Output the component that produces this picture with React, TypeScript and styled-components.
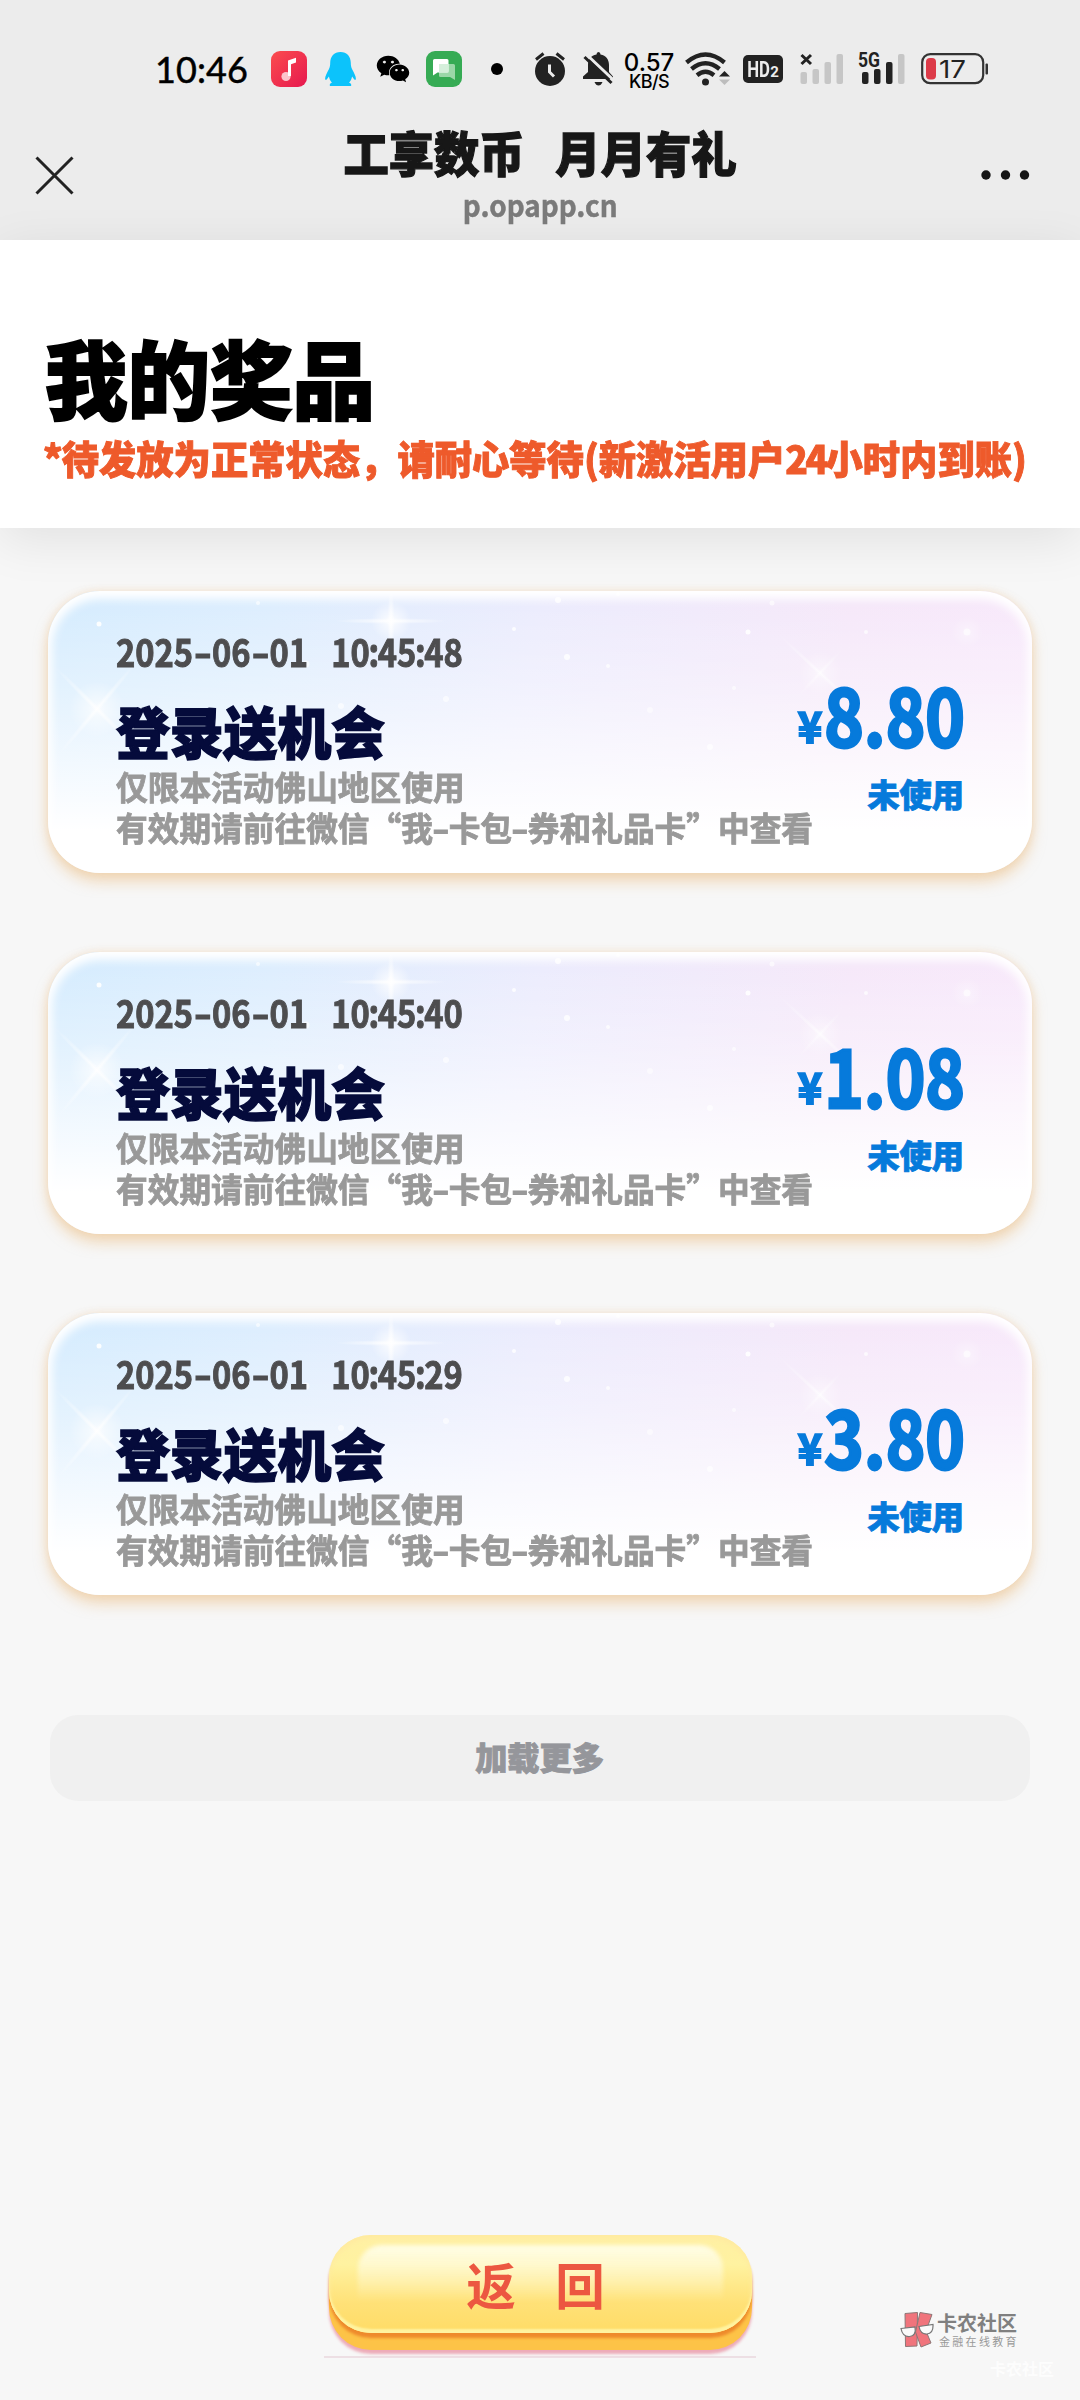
import React from "react";
import styled, { createGlobalStyle } from "styled-components";
import { FaWeixin } from "react-icons/fa";

const cjk = `"Noto Sans CJK SC", "Noto Sans", sans-serif`;

const GlobalStyle = createGlobalStyle`
  * { box-sizing: border-box; }
  body { margin: 0; background: #f7f7f7; font-family: ${cjk}; }
`;

const Screen = styled.div`
  width: 1080px;
  height: 2400px;
  display: flex;
  flex-direction: column;
  background: #f7f7f7;
  overflow: hidden;
`;

const Header = styled.header`
  height: 240px;
  flex: none;
  background: #ececec;
  display: flex;
  flex-direction: column;
`;

const StatusBar = styled.div`
  height: 120px;
  padding: 18px 0 0 155px;
  display: flex;
  align-items: center;
  color: #000;
`;

const Clock = styled.span`
  width: 116px;
  font: 400 36px/50px Lato, sans-serif;
  letter-spacing: 0.1px;
  white-space: nowrap;
  -webkit-text-stroke: 0.5px #000;
`;

const Slot = styled.span<{ $w: number; $gap?: number }>`
  flex: none;
  display: flex;
  width: ${(p) => p.$w}px;
  margin-right: ${(p) => p.$gap ?? 0}px;
`;

const Speed = styled.span`
  display: flex;
  flex-direction: column;
  align-items: center;
  width: 52px;
  padding-top: 4px;
  margin-right: 10px;
  font-family: Inter, Roboto, sans-serif;
  font-weight: 500;
  white-space: nowrap;
`;
const SpeedValue = styled.span`
  font-size: 24px;
  line-height: 20px;
`;
const SpeedUnit = styled.span`
  font-size: 18px;
  line-height: 17px;
  letter-spacing: -0.6px;
`;

const NavBar = styled.div`
  flex: 1;
  display: flex;
  justify-content: space-between;
  padding: 0 50px 0 35px;
`;
const NavSide = styled.div`
  width: 49px;
  padding-top: 36px;
`;
const NavTitles = styled.div`
  display: flex;
  flex-direction: column;
  align-items: center;
  padding-left: 15px;
`;
const NavTitle = styled.h1`
  margin: 1px 0 3px;
  font-size: 45.3px;
  line-height: 60px;
  font-weight: 900;
  color: #171717;
  white-space: pre;
  word-spacing: 5px;
  -webkit-text-stroke: 1.2px #171717;
  transform: scaleY(1.06);
`;
const NavUrl = styled.span`
  font-size: 30px;
  line-height: 40px;
  font-weight: 700;
  color: #7a7a7a;
  -webkit-text-stroke: 0.5px #7a7a7a;
  transform: scaleX(0.93);
`;

const Hero = styled.section`
  height: 288px;
  flex: none;
  background: #fff;
  padding: 82px 0 0 45px;
  box-shadow: 0 12px 48px rgba(0, 0, 0, 0.09);
`;
const HeroTitle = styled.h2`
  margin: 0;
  font-size: 82.5px;
  line-height: 108px;
  font-weight: 900;
  color: #000;
  -webkit-text-stroke: 2px #000;
  transform: scaleY(1.03);
`;
const HeroNote = styled.p`
  margin: 1px 0 0 -2px;
  font-size: 37.3px;
  line-height: 52px;
  font-weight: 900;
  color: #ee5a2b;
  white-space: nowrap;
  -webkit-text-stroke: 0.9px #ee5a2b;
  transform: scaleY(1.04);
`;
const Tight = styled.span<{ $by: number }>`
  letter-spacing: ${(p) => -p.$by}px;
`;

const List = styled.main`
  flex: none;
  display: flex;
  flex-direction: column;
  gap: 79px;
  padding: 63px 48px 0;
`;

const CardBox = styled.article`
  position: relative;
  height: 282px;
  display: flex;
  justify-content: space-between;
  padding: 35px 69px 0 68px;
  border-radius: 52px;
  background: linear-gradient(180deg, rgba(255, 255, 255, 0) 0%, rgba(255, 255, 255, 0.35) 35%, #fff 85%),
    linear-gradient(100deg, #d3ebfe 0%, #dcedfe 22%, #ebebfd 48%, #f5e7f9 78%, #f8e8fb 100%);
  box-shadow: inset 0 4px 10px 4px #fff, 0 9px 14px rgba(236, 190, 130, 0.5), 0 0 8px rgba(240, 205, 165, 0.45);
`;
const Sparkles = styled.svg`
  position: absolute;
  left: 0;
  top: 0;
  border-radius: 52px;
`;
const Details = styled.div`
  position: relative;
  display: flex;
  flex-direction: column;
`;
const Stamp = styled.time`
  display: flex;
  width: 400px;
  font-size: 38px;
  line-height: 50px;
  font-weight: 700;
  color: #4d4d4f;
  white-space: nowrap;
  -webkit-text-stroke: 1px #4d4d4f;
  transform: scaleX(0.86);
  transform-origin: left center;
`;
const Dash = styled.span<{ $w: number }>`
  display: inline-block;
  width: ${(p) => p.$w}px;
  text-align: center;
  transform: scaleX(1.5);
`;
const Colon = styled.span`
  margin: 0 -1.6px;
`;
const Clocktime = styled.span`
  margin-left: 27px;
`;
const CardTitle = styled.h3`
  margin: 24px 0 6px;
  font-size: 53.8px;
  line-height: 60px;
  font-weight: 900;
  color: #050b3b;
  -webkit-text-stroke: 1.4px #050b3b;
  transform: scaleY(1.04);
`;
const Rule = styled.p`
  margin: 0;
  font-size: 31.7px;
  line-height: 41px;
  font-weight: 700;
  color: #999;
  white-space: nowrap;
  -webkit-text-stroke: 0.8px #999;
  transform: scaleY(1.03);
`;
const Value = styled.div`
  position: relative;
  width: 0;
  display: flex;
  flex-direction: column;
  align-items: flex-end;
  padding-top: 46px;
  color: #067adb;
  white-space: nowrap;
`;
const Amount = styled.div`
  display: flex;
  align-items: baseline;
  height: 80px;
  margin-right: -2px;
  font-size: 78px;
  line-height: 82px;
  font-weight: 700;
  -webkit-text-stroke: 3px #067adb;
  transform: scaleX(0.86);
  transform-origin: right center;
`;
const Currency = styled.span`
  position: relative;
  top: -4px;
  font-size: 43px;
  line-height: 40px;
  margin-right: 4px;
  -webkit-text-stroke-width: 2px;
  transform: scaleX(1.12);
`;
const State = styled.span`
  margin: 21px -1px 0 0;
  font-size: 32.2px;
  line-height: 40px;
  font-weight: 900;
  -webkit-text-stroke: 0.9px #067adb;
`;

const LoadMore = styled.button`
  flex: none;
  margin: 120px 50px 0;
  height: 86px;
  padding: 0 1px 5px 0;
  border: 0;
  border-radius: 28px;
  background: #f0f0f0;
  color: #95969b;
  font: 900 32.2px/80px ${cjk};
  -webkit-text-stroke: 0.9px #95969b;
`;

const Footer = styled.footer`
  margin-top: auto;
  height: 166px;
  display: flex;
  padding-left: 324px;
`;
const ButtonArea = styled.div`
  width: 432px;
  height: 124px;
  padding: 1px 4px 0 5px;
  border-bottom: 2px solid #eddfe4;
`;
const BackButton = styled.button`
  position: relative;
  display: block;
  width: 423px;
  height: 98px;
  padding: 0;
  border: 0;
  border-radius: 42px;
  background: linear-gradient(180deg, #fff0a4 0%, #fff2a0 30%, #ffe177 70%, #ffdc66 100%);
  box-shadow: inset 0 -4px 2px #fff3a0, inset 0 3px 5px #ffeaa0, 0 5px 3px #ee8a2c, 0 17px 0 #fdc347,
    0 21px 3px #edabb8;
  color: #ec5741;
`;
const Gloss = styled.span`
  position: absolute;
  left: 29px;
  right: 29px;
  top: 10px;
  height: 56px;
  border-radius: 24px 24px 0 0;
  background: linear-gradient(180deg, #fffde6, rgba(255, 250, 200, 0));
  filter: blur(2px);
`;
const BackLabel = styled.span`
  position: relative;
  display: flex;
  justify-content: center;
  gap: 39.5px;
  padding-right: 10px;
  font: 700 49.5px/94px ${cjk};
`;

const Watermark = styled.div`
  display: flex;
  flex-direction: column;
  align-items: flex-start;
  padding: 78px 0 0 144px;
`;
const Brand = styled.div`
  display: flex;
  gap: 3px;
`;
const BrandText = styled.div`
  display: flex;
  flex-direction: column;
`;
const BrandName = styled.span`
  font-size: 20px;
  line-height: 22px;
  font-weight: 700;
  color: #808080;
`;
const BrandTag = styled.span`
  padding-left: 2px;
  font-size: 11px;
  line-height: 14px;
  letter-spacing: 2.3px;
  color: #999;
  white-space: nowrap;
`;
const Ghost = styled.span`
  margin: 9px 0 0 90px;
  font-size: 16px;
  line-height: 22px;
  font-weight: 700;
  color: #fdfdfd;
`;

const MusicIcon = () => (
  <svg width="36" height="36" viewBox="0 0 36 36">
    <defs>
      <linearGradient id="music" x1="0" y1="0" x2="1" y2="1">
        <stop offset="0" stopColor="#fb4d4e" />
        <stop offset="1" stopColor="#e6184f" />
      </linearGradient>
    </defs>
    <rect width="36" height="36" rx="9" fill="url(#music)" />
    <circle cx="15" cy="25.5" r="4.6" fill="#fcc5cc" />
    <path d="M17 25V9.500l8-2.700v4.800l-5 1.600V25z" fill="#fff" />
  </svg>
);

const PenguinIcon = () => (
  <svg width="31" height="35" viewBox="0 0 31 35">
    <path
      d="M15.500 0C9 0 5.200 4.500 5.200 11c0 2-.3 4-1.200 6-2 4-4 7-3.900 10 .1 1.500 1.300.8 2-.1l1.800-2.400c.5 2.500 1.500 4.500 3 6.200-2 .6-2.400 1.400-2 3.300h21.200c.4-1.900 0-2.700-2-3.300 1.500-1.700 2.500-3.700 3-6.200l1.800 2.400c.7.9 1.900 1.600 2 .1.100-3-1.900-6-3.900-10-.9-2-1.200-4-1.200-6C25.800 4.500 22 0 15.500 0z"
      fill="#0cc3fb"
    />
  </svg>
);

const ChatIcon = () => (
  <svg width="36" height="36" viewBox="0 0 36 36">
    <rect width="36" height="36" rx="9" fill="#36ab54" />
    <path d="M13 13h14.500q1.500 0 1.500 1.500V29l-5-3H14.500q-1.500 0-1.500-1.500z" fill="#9bd7a8" />
    <path d="M8.500 8H21q1.500 0 1.500 1.500v10.500q0 1.500-1.500 1.500H11.500L7 24.500V9.500Q7 8 8.500 8z" fill="#fff" />
    <path d="M13 13h9.500v8.500H13z" fill="#d5efdb" />
  </svg>
);

const AlarmIcon = () => (
  <svg width="32" height="34" viewBox="0 0 32 34" fill="none">
    <circle cx="16" cy="19" r="15" fill="#222" />
    <path d="M2 7.500 9.500 1.500M22.500 1.500 30 7.500" stroke="#222" strokeWidth="3" />
    <path d="M15.500 12.500v7.500l4.500 4.500" stroke="#ececec" strokeWidth="3" />
  </svg>
);

const MuteIcon = () => (
  <svg width="31" height="34" viewBox="0 0 31 34">
    <path
      d="M13.500 2.500Q13.500 0 15.500 0t2 2.500c5.500 1 8.500 5 8.500 10.500v7l4 4.500V27H0v-2.500L5 20v-7c0-5.500 3-9.500 8.500-10.500z"
      fill="#222"
    />
    <path d="M11.500 30h8q-1.500 3.500-4 3.500t-4-3.500z" fill="#222" />
    <path d="M3.500 2.500 31 28.500" stroke="#ececec" strokeWidth="3" />
    <path d="M1.500 5 28.500 31" stroke="#222" strokeWidth="3" />
  </svg>
);

const WifiIcon = () => (
  <svg width="45" height="34" viewBox="0 0 45 34" fill="none">
    <g stroke="#222" strokeWidth="4.400">
      <path d="M1.500 10.500Q20.500-5.500 39.500 10.500" />
      <path d="M6.500 17Q20.500 5.500 34.500 17" />
      <path d="M12 23.200Q20.500 16.500 29 23.200" />
    </g>
    <circle cx="20.500" cy="30" r="3.500" fill="#222" />
    <path d="M34 24.500 39.500 19l5.500 5.500z" fill="#222" />
    <path d="M34 27.500 39.500 33l5.500-5.500z" fill="#bdbdbd" />
  </svg>
);

const HdBadge = styled.span`
  display: flex;
  align-items: center;
  justify-content: center;
  width: 40px;
  height: 28px;
  border-radius: 5px;
  background: #222;
  color: #ececec;
  font: 700 20px/28px Roboto, sans-serif;
`;
const HdMain = styled.span`
  margin: 0 -2px;
  transform: scale(0.84, 1.1);
`;
const HdSub = styled.span`
  font-size: 15px;
  line-height: 20px;
  padding-top: 6px;
`;

const NoSignalIcon = () => (
  <svg width="44" height="32" viewBox="0 0 44 32">
    <path d="M1.500 2 11 11M11 2 1.500 11" stroke="#222" strokeWidth="3" />
    <g fill="#c6c6c6">
      <rect x="0.500" y="19" width="6.500" height="12" rx="2" />
      <rect x="12.500" y="16" width="6.500" height="15" rx="2" />
      <rect x="24.500" y="9" width="6.500" height="22" rx="2" />
      <rect x="36.500" y="1" width="6.500" height="30" rx="2" />
    </g>
  </svg>
);

const SignalIcon = () => (
  <svg width="48" height="34" viewBox="0 0 48 34" overflow="visible">
    <g fill="#222">
      <rect x="4" y="20" width="6.500" height="12" rx="2" />
      <rect x="16" y="17" width="6.500" height="15" rx="2" />
      <rect x="28" y="10" width="6.500" height="22" rx="2" />
    </g>
    <rect x="40" y="2" width="6.500" height="30" rx="2" fill="#c6c6c6" />
    <text x="0" y="15" fontFamily="Roboto, sans-serif" fontWeight="700" fontSize="20" textLength="22" lengthAdjust="spacingAndGlyphs" fill="#222">
      5G
    </text>
  </svg>
);

const BatteryIcon = () => (
  <svg width="68" height="32" viewBox="0 0 68 32">
    <rect x="1.200" y="1.200" width="61" height="29" rx="8" fill="none" stroke="#333" strokeWidth="2.200" />
    <rect x="5" y="5" width="10" height="21.500" rx="4" fill="#dc3a48" />
    <rect x="64.500" y="10.500" width="2.500" height="11" rx="1" fill="#333" />
    <text x="18" y="24.500" fontFamily="Inter, sans-serif" fontSize="24" textLength="27" lengthAdjust="spacingAndGlyphs" fill="#222">
      17
    </text>
  </svg>
);

const DOTS: [number, number, number, number][] = [
  [51, 33, 2.5, 0.9],
  [210, 12, 2, 0.6],
  [466, 38, 2, 0.8],
  [510, 9, 3, 0.8],
  [519, 66, 3, 0.8],
  [560, 75, 2, 0.7],
  [570, 3, 2, 0.7],
  [724, 12, 2.5, 0.6],
  [700, 41, 2.5, 0.9],
  [818, 41, 2, 0.7],
  [919, 41, 3.5, 0.6],
  [686, 97, 2, 0.6],
  [602, 119, 3, 0.5],
  [398, 108, 3, 0.6],
  [258, 73, 3.5, 0.6],
  [293, 115, 3, 0.6],
  [662, 156, 3, 0.7],
];

const CardSparkles = ({ id }: { id: string }) => (
  <Sparkles width="984" height="282" viewBox="0 0 984 282">
    <defs>
      <radialGradient id={id}>
        <stop offset="0" stopColor="#fff" />
        <stop offset="0.300" stopColor="#fff" stopOpacity="0.600" />
        <stop offset="1" stopColor="#fff" stopOpacity="0" />
      </radialGradient>
    </defs>
    <g fill={`url(#${id})`}>
      <circle cx="343" cy="30" r="20" />
      <ellipse cx="343" cy="30" rx="56" ry="3" />
      <ellipse cx="343" cy="30" rx="3.500" ry="34" />
      <circle cx="49" cy="118" r="28" opacity="0.800" />
      <ellipse cx="49" cy="118" rx="60" ry="3" transform="rotate(45 49 118)" opacity="0.800" />
      <ellipse cx="49" cy="118" rx="60" ry="3" transform="rotate(-50 49 118)" opacity="0.800" />
      <circle cx="772" cy="82" r="22" opacity="0.500" />
      <ellipse cx="772" cy="82" rx="56" ry="2.500" transform="rotate(43 772 82)" opacity="0.600" />
      <ellipse cx="772" cy="82" rx="32" ry="2.500" transform="rotate(-47 772 82)" opacity="0.500" />
      <circle cx="919" cy="41" r="16" opacity="0.400" />
    </g>
    {DOTS.map(([x, y, r, o], i) => (
      <circle key={i} cx={x} cy={y} r={r} fill="#fff" opacity={o} />
    ))}
  </Sparkles>
);

const BrandLogo = () => (
  <svg width="34" height="36" viewBox="0 0 34 36">
    <g fill="#f0747c" stroke="#8d7777" strokeWidth="1">
      <path d="M5 1.500 17.500.500 17 34 5.500 34.500z" />
      <path d="M20 .500 32 2.500 26 19 31 31 21 35 15.500 20z" />
    </g>
    <g fill="#fafafa" stroke="#777" strokeWidth="1.200">
      <path d="M1 16.500 15 15q1.500 9-5.500 9.500T1 16.500z" />
      <path d="M19 14.500 33 12.500q.500 9-6 9.500t-8-7.500z" />
    </g>
  </svg>
);

type Prize = { time: [string, string, string]; amount: string };
const PRIZES: Prize[] = [
  { time: ["10", "45", "48"], amount: "8.80" },
  { time: ["10", "45", "40"], amount: "1.08" },
  { time: ["10", "45", "29"], amount: "3.80" },
];

const PrizeCard = ({ time: [h, m, s], amount }: Prize) => (
  <CardBox>
    <CardSparkles id={`glow-${amount.replace(".", "-")}`} />
    <Details>
      <Stamp>
        <span>
          2025<Dash $w={22}>-</Dash>06<Dash $w={22}>-</Dash>01
        </span>
        <Clocktime>
          {h}<Colon>:</Colon>{m}<Colon>:</Colon>{s}
        </Clocktime>
      </Stamp>
      <CardTitle>登录送机会</CardTitle>
      <Rule>仅限本活动佛山地区使用</Rule>
      <Rule>
        有效期请前往微信“我<Dash $w={15.8}>-</Dash>卡包<Dash $w={15.8}>-</Dash>券和礼品卡”中查看
      </Rule>
    </Details>
    <Value>
      <Amount>
        <Currency>¥</Currency>
        {amount}
      </Amount>
      <State>未使用</State>
    </Value>
  </CardBox>
);

export default function App() {
  return (
    <Screen lang="zh-CN">
      <GlobalStyle />
      <Header>
        <StatusBar>
          <Clock>10:46</Clock>
          <Slot $w={36} $gap={18}><MusicIcon /></Slot>
          <Slot $w={31} $gap={20}><PenguinIcon /></Slot>
          <Slot $w={34} $gap={16}><FaWeixin size={34} /></Slot>
          <Slot $w={36} $gap={29}><ChatIcon /></Slot>
          <Slot $w={12} $gap={31}>
            <svg width="12" height="12"><circle cx="6" cy="6" r="6" /></svg>
          </Slot>
          <Slot $w={32} $gap={17}><AlarmIcon /></Slot>
          <Slot $w={31} $gap={9}><MuteIcon /></Slot>
          <Speed>
            <SpeedValue>0.57</SpeedValue>
            <SpeedUnit>KB/S</SpeedUnit>
          </Speed>
          <Slot $w={45} $gap={13}><WifiIcon /></Slot>
          <Slot $w={40} $gap={17}><HdBadge><HdMain>HD</HdMain><HdSub>2</HdSub></HdBadge></Slot>
          <Slot $w={44} $gap={14}><NoSignalIcon /></Slot>
          <Slot $w={48} $gap={15}><SignalIcon /></Slot>
          <Slot $w={68}><BatteryIcon /></Slot>
        </StatusBar>
        <NavBar>
          <NavSide>
            <svg width="39" height="39" viewBox="0 0 39 39">
              <path d="M1.500 1.500 37.500 37.500M37.500 1.500 1.500 37.500" stroke="#222" strokeWidth="3" />
            </svg>
          </NavSide>
          <NavTitles>
            <NavTitle>工享数币  月月有礼</NavTitle>
            <NavUrl>p.opapp.cn</NavUrl>
          </NavTitles>
          <NavSide>
            <svg width="49" height="39" viewBox="0 0 49 39" fill="#171717">
              <circle cx="5" cy="19" r="4.700" />
              <circle cx="24.500" cy="19" r="4.700" />
              <circle cx="43.500" cy="19" r="4.700" />
            </svg>
          </NavSide>
        </NavBar>
      </Header>
      <Hero>
        <HeroTitle>我的奖品</HeroTitle>
        <HeroNote>
          <Tight $by={1}>*</Tight>待发放为正常状态，请耐心等待<Tight $by={0}>(</Tight>新激活用户<Tight $by={2.6}>24</Tight>小时内到账<Tight $by={0}>)</Tight>
        </HeroNote>
      </Hero>
      <List>
        {PRIZES.map((p) => (
          <PrizeCard key={p.amount} {...p} />
        ))}
      </List>
      <LoadMore>加载更多</LoadMore>
      <Footer>
        <ButtonArea>
          <BackButton>
            <Gloss />
            <BackLabel>
              <span>返</span>
              <span>回</span>
            </BackLabel>
          </BackButton>
        </ButtonArea>
        <Watermark>
          <Brand>
            <BrandLogo />
            <BrandText>
              <BrandName>卡农社区</BrandName>
              <BrandTag>金融在线教育</BrandTag>
            </BrandText>
          </Brand>
          <Ghost>卡农社区</Ghost>
        </Watermark>
      </Footer>
    </Screen>
  );
}
